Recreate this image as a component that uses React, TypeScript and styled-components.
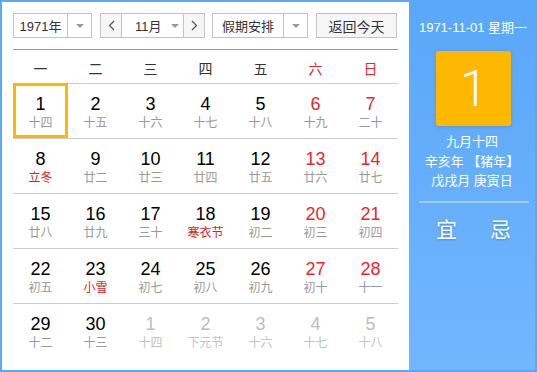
import React from "react";
import styled, { createGlobalStyle } from "styled-components";

const GlobalStyle = createGlobalStyle`
  html, body { margin: 0; padding: 0; background: #fff; }
  body { font-family: "Liberation Sans", "Noto Sans CJK SC", sans-serif; }
  * { box-sizing: border-box; }
`;

const Frame = styled.div`
  width: 537px;
  height: 372px;
  border: 2px solid #5aa8f8;
  display: flex;
  overflow: hidden;
`;

const Left = styled.div`
  width: 407px;
  padding: 11px 11px 0 11px;
  background: #fff;
  display: flex;
  flex-direction: column;
`;

const Toolbar = styled.div`
  display: flex;
  height: 25px;
  align-items: stretch;
`;

const Select = styled.div<{ $w: number; $ml?: number }>`
  width: ${(p) => p.$w}px;
  margin-left: ${(p) => p.$ml ?? 0}px;
  border: 1px solid #c4c4c4;
  background: #fff;
  display: flex;
  font-size: 13px;
  color: #333;
`;

const SelLabel = styled.div`
  flex: 1;
  display: flex;
  align-items: center;
  justify-content: center;
`;

const SelArrow = styled.div<{ $divider?: boolean }>`
  width: 24px;
  border-left: ${(p) => (p.$divider ? "1px solid #c4c4c4" : "none")};
  display: flex;
  align-items: center;
  justify-content: center;
  &::after {
    content: "";
    border-left: 4px solid transparent;
    border-right: 4px solid transparent;
    border-top: 4px solid #999;
  }
`;

const Group = styled.div`
  display: flex;
  margin-left: 8px;
`;

const NavBtn = styled.div`
  width: 22px;
  border: 1px solid #c4c4c4;
  background: #f6f6f6;
  display: flex;
  align-items: center;
  justify-content: center;
  color: #555;
`;

const MonthSel = styled.div`
  width: 61px;
  border-top: 1px solid #c4c4c4;
  border-bottom: 1px solid #c4c4c4;
  background: #fff;
  display: flex;
  align-items: center;
  padding-left: 13px;
  font-size: 13px;
  color: #333;
  gap: 9px;
  &::after {
    content: "";
    border-left: 4px solid transparent;
    border-right: 4px solid transparent;
    border-top: 4px solid #999;
  }
`;

const TodayBtn = styled.div`
  width: 81px;
  margin-left: 8px;
  border: 1px solid #c4c4c4;
  background: #f6f6f6;
  display: flex;
  align-items: center;
  justify-content: center;
  font-size: 14px;
  color: #333;
`;

const Rule = styled.div`
  height: 1px;
  background: #5aa8f8;
  margin-top: 11px;
`;

const Grid = styled.div`
  display: grid;
  grid-template-columns: repeat(7, 55px);
`;

const WeekHead = styled.div<{ $red?: boolean }>`
  height: 33px;
  display: flex;
  align-items: center;
  justify-content: center;
  padding-top: 3px;
  font-size: 14px;
  color: ${(p) => (p.$red ? "#e8262b" : "#333")};
`;

const Cell = styled.div<{ $sel?: boolean }>`
  height: 55px;
  border-top: 1px solid #cccccc;
  padding-top: 9px;
  display: flex;
  flex-direction: column;
  align-items: center;
  ${(p) => p.$sel && `border: 3px solid #ffb800; padding-top: 7px;`}
`;

const Num = styled.div<{ $tone: "normal" | "red" | "dim" }>`
  font-size: 18px;
  line-height: 22px;
  color: ${(p) => (p.$tone === "red" ? "#e8262b" : p.$tone === "dim" ? "#bdbdbd" : "#000")};
`;

const Lunar = styled.div<{ $tone: "normal" | "red" | "dim" }>`
  font-size: 12px;
  line-height: 16px;
  color: ${(p) => (p.$tone === "red" ? "#e02020" : p.$tone === "dim" ? "#c2c2c2" : "#999")};
`;

const Right = styled.div`
  flex: 1;
  background: linear-gradient(to bottom, #5aa7f8, #72b6fe);
  display: flex;
  flex-direction: column;
  align-items: center;
  color: #fff;
  padding-top: 17px;
`;

const DateLine = styled.div`
  font-size: 13px;
  line-height: 18px;
  padding-left: 2px;
`;

const BigDay = styled.div`
  width: 75px;
  height: 75px;
  margin-top: 14px;
  margin-left: 3px;
  border-radius: 3px;
  background: #ffb800;
  box-shadow: 0 1px 4px rgba(0, 0, 0, 0.12);
  display: flex;
  align-items: center;
  justify-content: center;
  font-family: Roboto, "Liberation Sans", sans-serif;
  font-weight: 300;
  font-size: 50px;
  color: #fff;
`;

const InfoLines = styled.div`
  margin-top: 6px;
  font-size: 13px;
  line-height: 19.5px;
  text-align: center;
`;

const Divider = styled.div`
  width: 110px;
  height: 2px;
  margin-top: 10px;
  margin-left: 3px;
  background: rgba(255, 255, 255, 0.35);
`;

const YiJi = styled.div`
  display: flex;
  gap: 33px;
  margin-top: 14px;
  margin-left: 3px;
  font-size: 21px;
  line-height: 26px;
  text-shadow: 0 1px 2px rgba(0, 0, 0, 0.25);
`;

type Day = { n: number; l: string; red?: boolean; lred?: boolean; dim?: boolean; sel?: boolean };

const weeks = ["一", "二", "三", "四", "五", "六", "日"];

const raw: [number, string, boolean?][] = [
  [1, "十四"], [2, "十五"], [3, "十六"], [4, "十七"], [5, "十八"], [6, "十九"], [7, "二十"],
  [8, "立冬", true], [9, "廿二"], [10, "廿三"], [11, "廿四"], [12, "廿五"], [13, "廿六"], [14, "廿七"],
  [15, "廿八"], [16, "廿九"], [17, "三十"], [18, "寒衣节", true], [19, "初二"], [20, "初三"], [21, "初四"],
  [22, "初五"], [23, "小雪", true], [24, "初七"], [25, "初八"], [26, "初九"], [27, "初十"], [28, "十一"],
  [29, "十二"], [30, "十三"], [1, "十四"], [2, "下元节"], [3, "十六"], [4, "十七"], [5, "十八"],
];

const days: Day[] = raw.map(([n, l, lred], i) => ({
  n,
  l,
  lred,
  red: i % 7 >= 5,
  dim: i >= 30,
  sel: i === 0,
}));

export default function App() {
  return (
    <>
      <GlobalStyle />
      <Frame>
        <Left>
          <Toolbar>
            <Select $w={79}>
              <SelLabel>1971年</SelLabel>
              <SelArrow $divider />
            </Select>
            <Group>
              <NavBtn>
                <svg width="7" height="11" viewBox="0 0 7 11">
                  <path d="M6 1 L1.5 5.5 L6 10" fill="none" stroke="#555" strokeWidth="1.2" />
                </svg>
              </NavBtn>
              <MonthSel>11月</MonthSel>
              <NavBtn>
                <svg width="7" height="11" viewBox="0 0 7 11">
                  <path d="M1 1 L5.5 5.5 L1 10" fill="none" stroke="#555" strokeWidth="1.2" />
                </svg>
              </NavBtn>
            </Group>
            <Select $w={96} $ml={7}>
              <SelLabel>假期安排</SelLabel>
              <SelArrow $divider />
            </Select>
            <TodayBtn>返回今天</TodayBtn>
          </Toolbar>
          <Rule />
          <Grid>
            {weeks.map((w, i) => (
              <WeekHead key={w} $red={i >= 5}>
                {w}
              </WeekHead>
            ))}
            {days.map((d, i) => (
              <Cell key={i} $sel={d.sel}>
                <Num $tone={d.dim ? "dim" : d.red ? "red" : "normal"}>{d.n}</Num>
                <Lunar $tone={d.dim ? "dim" : d.lred ? "red" : "normal"}>{d.l}</Lunar>
              </Cell>
            ))}
          </Grid>
        </Left>
        <Right>
          <DateLine>1971-11-01 星期一</DateLine>
          <BigDay>1</BigDay>
          <InfoLines>
            <div>九月十四</div>
            <div>辛亥年 【猪年】</div>
            <div>戊戌月 庚寅日</div>
          </InfoLines>
          <Divider />
          <YiJi>
            <span>宜</span>
            <span>忌</span>
          </YiJi>
        </Right>
      </Frame>
    </>
  );
}
